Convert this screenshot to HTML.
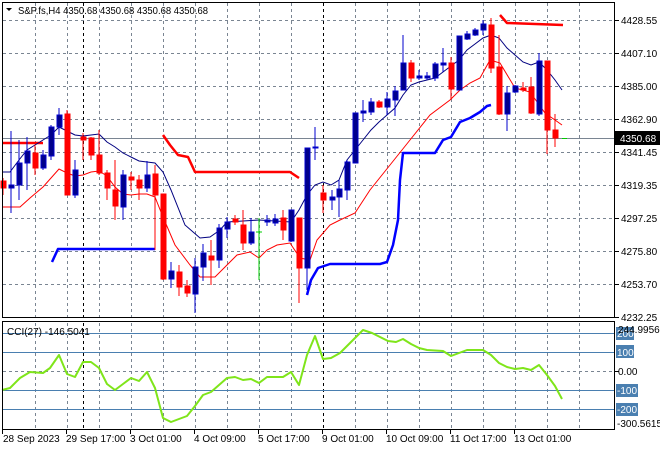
<!DOCTYPE html>
<html><head><meta charset="utf-8"><style>
html,body{margin:0;padding:0;background:#fff;}
svg{display:block;font-family:"Liberation Sans",Arial,sans-serif;font-size:10px;}
</style></head><body>
<svg width="660" height="450" viewBox="0 0 660 450" xmlns="http://www.w3.org/2000/svg">
<rect width="660" height="450" fill="#fff"/>
<g stroke="#7a8592" stroke-dasharray="3,3" stroke-width="1">
<path d="M3 20.5H614M3 53.5H614M3 86.5H614M3 119.5H614M3 152.5H614M3 185.5H614M3 218.5H614M3 251.5H614M3 284.5H614"/>
<path d="M35.5 3V317M67.5 3V317M99.5 3V317M131.5 3V317M163.5 3V317M195.5 3V317M227.5 3V317M259.5 3V317M291.5 3V317M355.5 3V317M387.5 3V317M419.5 3V317M451.5 3V317M483.5 3V317M515.5 3V317M547.5 3V317M579.5 3V317"/>
<path d="M35.5 323V428M67.5 323V428M99.5 323V428M131.5 323V428M163.5 323V428M195.5 323V428M227.5 323V428M259.5 323V428M291.5 323V428M355.5 323V428M387.5 323V428M419.5 323V428M451.5 323V428M483.5 323V428M515.5 323V428M547.5 323V428M579.5 323V428M3 371.5H614"/>
</g>
<g stroke="#000" stroke-dasharray="3,3"><path d="M83.5 3V317M323.5 3V317M83.5 323V428M323.5 323V428"/></g>
<path d="M3 138.5H614" stroke="#7a8592"/>
<g stroke="#4a7fb0"><path d="M3 333.5H614M3 352.5H614M3 390.5H614M3 409.5H614"/></g>
<g fill="none" stroke-width="2.5" stroke-linejoin="round">
<path stroke="#f00" d="M2 143H43"/>
<path stroke="#f00" d="M163 135L170 145L178 155L188 157L195 172L290 172L299 178"/>
<path stroke="#f00" d="M500 15L507 23L563 25"/>
<path stroke="#00f" d="M52 262L58 249L155 249"/>
<path stroke="#00f" d="M307 295L311 280L318 268L330 264L380 264L387 262L393 245L398 220L400 180L403 153L435 153L443 140L451 137L460 122L470 118L480 112L487 106L491 105"/>
</g>
<path fill="none" stroke="#000080" d="M2 172L10 172L19 160L27 150L35 145L43 140L51 135L59 127L67 131L75 135L83 136L91 135L99 134L107 142L115 147L123 153L131 157L139 161L147 162L155 163L163 172L171 190L185 225L200 238L210 237L220 230L227 222L259 220L291 222L299 210L307 195L315 185L323 182L331 185L339 180L347 160L355 150L363 140L371 130L379 122L387 115L395 108L403 95L411 85L419 82L427 80L435 78L443 72L451 66L459 60L467 50L475 44L483 38L491 35L499 38L507 48L515 55L523 62L531 65L539 62L547 70L555 80L562 90"/>
<path fill="none" stroke="#f00" d="M2 207L20 207L30 198L43 187L59 169L67 173L75 176L83 175L91 172L99 171L107 176L115 187L123 194L131 195L139 194L147 194L155 197L163 217L175 245L190 265L200 277L215 277L227 265L237 255L250 252L259 258L267 250L277 245L290 243L300 258L310 260L317 240L330 225L340 220L355 213L370 190L390 165L410 140L430 115L450 100L460 90L470 83L480 78L490 60L500 63L515 88L530 92L545 113L555 120L562 125"/>
<g>
<g fill="#f00" stroke="#f00">
<path d="M3 178V195M35 145V175M67 110V195M83 133V160M91 137V160M99 130V175M107 170V200M115 160V220M131 172V190M139 175V200M155 165V250M163 194V280M179 265V296M187 280V297M211 240V285M235 215V225M243 210V250M283 210V240M299 218V303M323 185V213M379 100V108M411 60V82M451 57V99M491 18V73M499 35V115M523 82V92M531 77V114M547 61V154M555 114V147" fill="none"/>
<rect x="1" y="181" width="5" height="7"/><rect x="33" y="153" width="5" height="15"/><rect x="65" y="114" width="5" height="81"/><rect x="81" y="137" width="5" height="3"/><rect x="89" y="138" width="5" height="17"/><rect x="97" y="155" width="5" height="18"/><rect x="105" y="173" width="5" height="15"/><rect x="113" y="190" width="5" height="16"/><rect x="129" y="177" width="5" height="3"/><rect x="137" y="180" width="5" height="8"/><rect x="153" y="174" width="5" height="21"/><rect x="161" y="194" width="5" height="85"/><rect x="177" y="272" width="5" height="15"/><rect x="185" y="286" width="5" height="7"/><rect x="209" y="256" width="5" height="4"/><rect x="233" y="219" width="5" height="3"/><rect x="241" y="225" width="5" height="18"/><rect x="281" y="218" width="5" height="12"/><rect x="297" y="218" width="5" height="50"/><rect x="321" y="193" width="5" height="7"/><rect x="377" y="102" width="5" height="5"/><rect x="409" y="63" width="5" height="15"/><rect x="449" y="63" width="5" height="26"/><rect x="489" y="25" width="5" height="43"/><rect x="497" y="67" width="5" height="47"/><rect x="521" y="88" width="5" height="2"/><rect x="529" y="87" width="5" height="26"/><rect x="545" y="61" width="5" height="69"/><rect x="553" y="130" width="5" height="8"/>
</g>
<g fill="#00008b" stroke="#0000cd">
<path d="M11 131V213M19 140V200M27 137V190M43 150V170M51 125V160M59 108V135M75 160V198M123 170V220M147 161V192M171 262V288M195 258V313M203 244V281M219 224V268M227 217V238M251 218V245M267 215V226M275 214V226M291 210V242M307 148V290M315 127V160M332 190V210M339 180V217M347 160V200M355 113V163M363 100V122M371 98V115M387 92V115M395 86V116M403 35V90M419 70V80M427 72V80M435 62V81M443 48V72M459 36V90M467 31V40M475 28V36M483 20V35M507 86V131M515 85V93M539 53V116" fill="none"/>
<rect x="9" y="185" width="5" height="3"/><rect x="17" y="163" width="5" height="22"/><rect x="25" y="151" width="5" height="12"/><rect x="41" y="155" width="5" height="13"/><rect x="49" y="127" width="5" height="29"/><rect x="57" y="115" width="5" height="12"/><rect x="73" y="170" width="5" height="25"/><rect x="121" y="175" width="5" height="32"/><rect x="145" y="175" width="5" height="13"/><rect x="169" y="271" width="5" height="8"/><rect x="193" y="267" width="5" height="27"/><rect x="201" y="253" width="5" height="14"/><rect x="217" y="228" width="5" height="32"/><rect x="225" y="222" width="5" height="7"/><rect x="249" y="232" width="5" height="11"/><rect x="265" y="220" width="5" height="2"/><rect x="273" y="219" width="5" height="4"/><rect x="289" y="210" width="5" height="31"/><rect x="305" y="148" width="5" height="120"/><rect x="313" y="147" width="5" height="1"/><rect x="330" y="197" width="5" height="3"/><rect x="337" y="189" width="5" height="8"/><rect x="345" y="162" width="5" height="28"/><rect x="353" y="113" width="5" height="50"/><rect x="361" y="111" width="5" height="2"/><rect x="369" y="102" width="5" height="10"/><rect x="385" y="99" width="5" height="8"/><rect x="393" y="91" width="5" height="9"/><rect x="401" y="63" width="5" height="27"/><rect x="417" y="76" width="5" height="2"/><rect x="425" y="76" width="5" height="2"/><rect x="433" y="64" width="5" height="14"/><rect x="441" y="63" width="5" height="2"/><rect x="457" y="36" width="5" height="54"/><rect x="465" y="34" width="5" height="5"/><rect x="473" y="30" width="5" height="5"/><rect x="481" y="24" width="5" height="6"/><rect x="505" y="93" width="5" height="21"/><rect x="513" y="86" width="5" height="6"/><rect x="537" y="61" width="5" height="53"/>
</g>
<path d="M259 218V280M256 232H262M562 138.5H567" stroke="#0c0" fill="none"/>
</g>
<path fill="none" stroke="#7fe51a" stroke-width="2" stroke-linejoin="round" d="M2 390L10 388L20 378L30 372L43 373L50 368L59 355L67 374L75 377L83 362L91 362L99 368L107 384L115 390L123 384L131 378L139 381L147 372L155 388L163 418L171 422L179 419L187 416L195 406L203 395L211 392L219 385L227 378L235 377L243 380L251 379L259 383L267 377L275 377L283 377L291 372L299 385L307 355L315 336L323 359L331 358L340 353L348 345L356 337L363 330L372 333L380 337L388 341L396 342L403 339L411 344L419 348L427 350L443 351L451 356L459 353L467 350L483 350L491 355L499 363L507 367L515 369L523 368L531 370L539 365L547 375L555 386L562 399"/>
<g fill="none" stroke="#000">
<rect x="2.5" y="2.5" width="612" height="315"/>
<rect x="2.5" y="321.5" width="612" height="108"/>
</g>
<g stroke="#000"><path d="M615 20.5h4M615 53.5h4M615 86.5h4M615 119.5h4M615 152.5h4M615 185.5h4M615 218.5h4M615 251.5h4M615 284.5h4M615 317.5h4M615 371.5h4M2.5 430v4M66.5 430v4M130.5 430v4M194.5 430v4M258.5 430v4M322.5 430v4M386.5 430v4M450.5 430v4M514.5 430v4"/></g>
<path d="M6 8h6l-3 3z" fill="#000"/>
<text x="18" y="14" fill="#000" textLength="190" lengthAdjust="spacingAndGlyphs">S&amp;P.fs,H4  4350.68 4350.68 4350.68 4350.68</text>
<g fill="#000">
<text x="621" y="24">4428.55</text><text x="621" y="57">4407.10</text><text x="621" y="90">4385.00</text><text x="621" y="123">4362.90</text><text x="621" y="156">4341.45</text><text x="621" y="189">4319.35</text><text x="621" y="222">4297.25</text><text x="621" y="255">4275.80</text><text x="621" y="288">4253.70</text><text x="621" y="321">4232.25</text>
</g>
<rect x="615" y="131" width="45" height="14" fill="#000"/>
<text x="620" y="142" fill="#fff">4350.68</text>
<text x="7" y="335" fill="#000">CCI(27) -146.5041</text>
<g fill="#4a7fb0"><rect x="616" y="327" width="18" height="13"/><rect x="616" y="345" width="18" height="13"/><rect x="616" y="384" width="22" height="13"/><rect x="616" y="403" width="22" height="13"/></g>
<g fill="#fff"><text x="617" y="337">200</text><text x="617" y="356">100</text><text x="617" y="394">-100</text><text x="617" y="413">-200</text></g>
<text x="618" y="333" fill="#000">244.9956</text>
<text x="618" y="375" fill="#000">0.00</text>
<text x="617" y="427" fill="#000">-300.5615</text>
<g fill="#000">
<text x="3" y="442">28 Sep 2023</text><text x="66" y="442">29 Sep 17:00</text><text x="130" y="442">3 Oct 01:00</text><text x="194" y="442">4 Oct 09:00</text><text x="258" y="442">5 Oct 17:00</text><text x="322" y="442">9 Oct 01:00</text><text x="386" y="442">10 Oct 09:00</text><text x="450" y="442">11 Oct 17:00</text><text x="514" y="442">13 Oct 01:00</text>
</g>
</svg>
</body></html>
